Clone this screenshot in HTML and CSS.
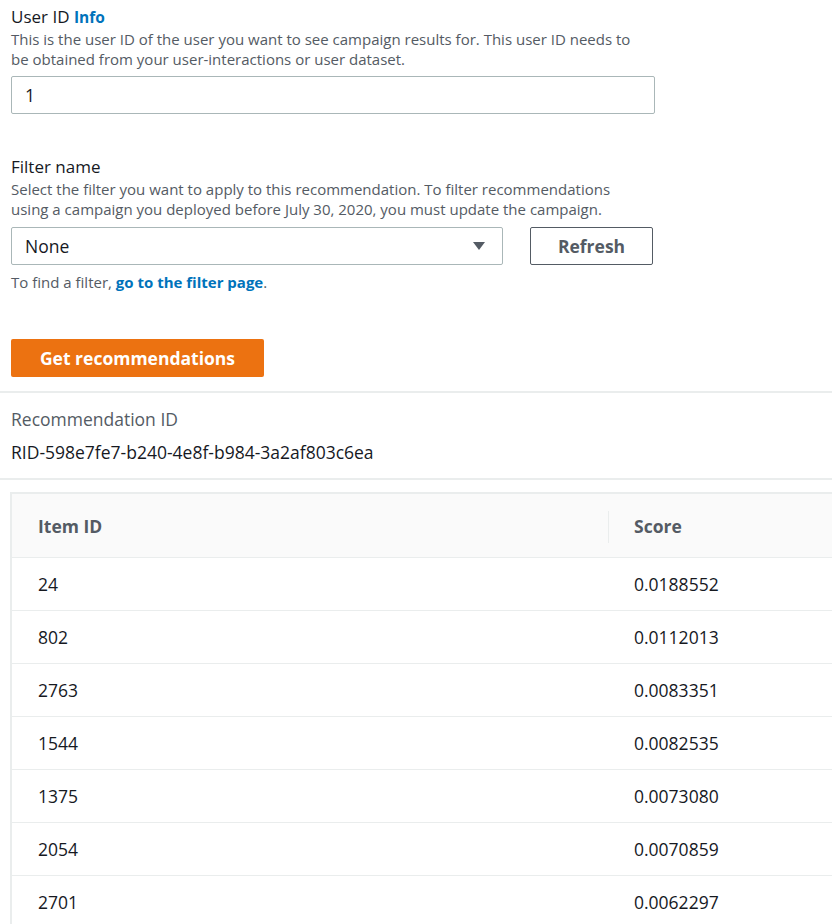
FILE: index.html
```html
<!DOCTYPE html>
<html>
<head>
<meta charset="utf-8">
<link rel="stylesheet" href="styles.css">
</head>
<body>
<div class="form">
  <div class="field">
    <div class="label">User ID <a class="info">Info</a></div>
    <div class="desc">This is the user ID of the user you want to see campaign results for. This user ID needs to be obtained from your user-interactions or user dataset.</div>
    <div class="input">1</div>
  </div>
  <div class="field field-filter">
    <div class="label">Filter name</div>
    <div class="desc">Select the filter you want to apply to this recommendation. To filter recommendations using a campaign you deployed before July 30, 2020, you must update the campaign.</div>
    <div class="select-row">
      <div class="select"><span>None</span><svg class="caret" width="14" height="10" viewBox="0 0 14 10"><path d="M1 1h12L7 9z" fill="#545b64"/></svg></div>
      <button class="btn-normal">Refresh</button>
    </div>
    <div class="hint">To find a filter, <a class="link">go to the filter page</a>.</div>
  </div>
  <button class="btn-primary">Get recommendations</button>
</div>
<div class="divider divider-top"></div>
<div class="result">
  <div class="result-label">Recommendation ID</div>
  <div class="result-value">RID-598e7fe7-b240-4e8f-b984-3a2af803c6ea</div>
</div>
<div class="divider"></div>
<div class="table-wrap">
  <table class="table">
    <thead>
      <tr><th class="col-id">Item ID</th><th class="col-score"><span class="sep"></span>Score</th></tr>
    </thead>
    <tbody>
      <tr><td>24</td><td>0.0188552</td></tr>
      <tr><td>802</td><td>0.0112013</td></tr>
      <tr><td>2763</td><td>0.0083351</td></tr>
      <tr><td>1544</td><td>0.0082535</td></tr>
      <tr><td>1375</td><td>0.0073080</td></tr>
      <tr><td>2054</td><td>0.0070859</td></tr>
      <tr><td>2701</td><td>0.0062297</td></tr>
    </tbody>
  </table>
</div>
</body>
</html>
```
FILE: styles.css
```css
html, body {
  margin: 0;
  padding: 0;
  background: #fff;
  font-family: "Open Sans", "Noto Sans", sans-serif;
  color: #16191f;
}
.form {
  padding: 6px 0 0 11px;
  width: 644px;
}
.label {
  font-size: 17px;
  line-height: 22px;
  color: #16191f;
}
.info {
  font-weight: 700;
  font-size: 15.5px;
  color: #0073bb;
}
.desc {
  width: 636px;
  margin-top: 1px;
  font-size: 15px;
  line-height: 20px;
  color: #545b64;
}
.input {
  margin-top: 7px;
  height: 38px;
  box-sizing: border-box;
  border: 1px solid #aab7b8;
  border-radius: 2px;
  padding: 0 13px;
  font-size: 17.5px;
  line-height: 36px;
}
.field-filter {
  margin-top: 42px;
}
.select-row {
  display: flex;
  gap: 27px;
  margin-top: 8px;
}
.select {
  width: 492px;
  height: 38px;
  box-sizing: border-box;
  border: 1px solid #aab7b8;
  border-radius: 2px;
  padding: 0 16px 0 13px;
  display: flex;
  align-items: center;
  justify-content: space-between;
  font-size: 17.5px;
}
.btn-normal {
  width: 123px;
  height: 38px;
  box-sizing: border-box;
  border: 1px solid #545b64;
  border-radius: 2px;
  background: #fff;
  color: #545b64;
  font-family: inherit;
  font-weight: 700;
  font-size: 17.5px;
  padding: 0;
}
.hint {
  margin-top: 7px;
  font-size: 15px;
  line-height: 20px;
  color: #545b64;
}
.link {
  color: #0073bb;
  font-weight: 700;
}
.btn-primary {
  margin-top: 47px;
  width: 253px;
  height: 38px;
  border: none;
  border-radius: 2px;
  background: #ec7211;
  color: #fff;
  font-family: inherit;
  font-weight: 700;
  font-size: 17.5px;
  padding: 0;
  display: block;
}
.divider {
  height: 2px;
  background: #eaeded;
}
.divider-top {
  margin-top: 14px;
}
.result {
  padding: 15px 0 15px 11px;
}
.result-label {
  font-size: 17.5px;
  line-height: 22px;
  color: #545b64;
}
.result-value {
  margin-top: 11px;
  font-size: 17.5px;
  line-height: 22px;
  color: #16191f;
}
.table-wrap {
  margin: 12px 0 0 10px;
}
.table {
  width: 822px;
  border-collapse: collapse;
  border-left: 2px solid #eaeded;
  border-top: 2px solid #eaeded;
}
.table th {
  background: #fafafa;
  height: 63px;
  text-align: left;
  font-weight: 700;
  font-size: 17.5px;
  color: #545b64;
  border-bottom: 1px solid #eaeded;
  padding: 0;
}
.col-id {
  width: 570px;
  padding-left: 26px !important;
}
.col-score {
  position: relative;
  padding-left: 26px !important;
}
.sep {
  position: absolute;
  left: 0;
  top: 17px;
  height: 32px;
  width: 1px;
  background: #eaeded;
}
.table td {
  height: 52px;
  border-bottom: 1px solid #eaeded;
  font-size: 17.5px;
  color: #16191f;
  padding: 0;
}
.table td:first-child {
  padding-left: 26px;
}
.table td:last-child {
  padding-left: 26px;
}
```
